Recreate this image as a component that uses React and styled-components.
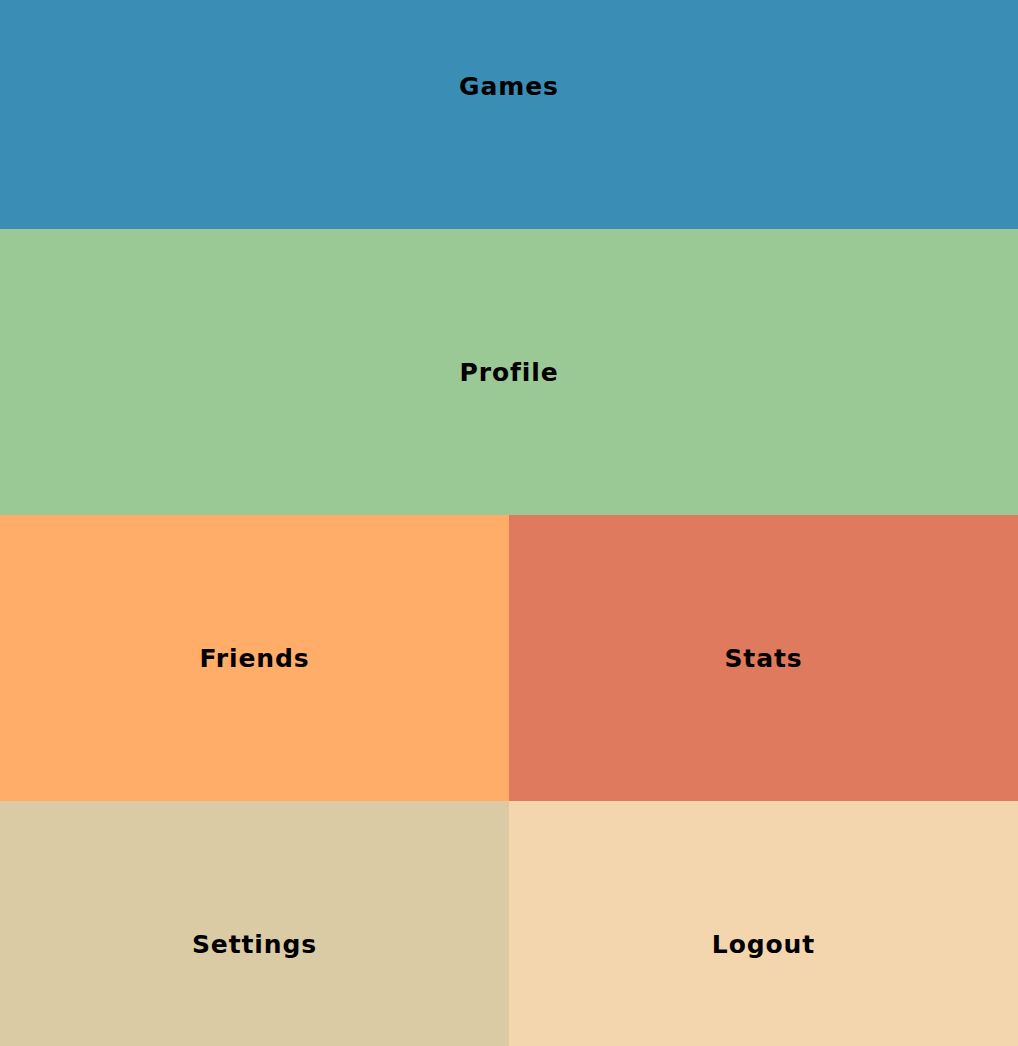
import React from 'react';
import styled, { createGlobalStyle } from 'styled-components';

const GlobalStyle = createGlobalStyle`
  html, body {
    margin: 0;
    padding: 0;
    overflow: hidden;
  }
`;

const Menu = styled.div`
  display: grid;
  grid-template-columns: 509px 509px;
  grid-template-rows: 229px 286px 286px 286px;
  width: 1018px;
  height: 1046px;
  overflow: hidden;
`;

const Tile = styled.a`
  display: flex;
  align-items: center;
  justify-content: center;
  grid-column: ${(p) => (p.wide ? '1 / 3' : 'auto')};
  padding-bottom: ${(p) => (p.cut ? '57px' : '0')};
  background: ${(p) => p.color};
  color: #000;
  text-decoration: none;
  font-family: 'DejaVu Sans', 'Liberation Sans', sans-serif;
  font-weight: 700;
  font-size: 25px;
  letter-spacing: 0.9px;
  cursor: pointer;
`;

const tiles = [
  { label: 'Games', color: '#3a8db4', wide: true, cut: true },
  { label: 'Profile', color: '#9bc995', wide: true },
  { label: 'Friends', color: '#ffad69' },
  { label: 'Stats', color: '#e07a5f' },
  { label: 'Settings', color: '#dacba5' },
  { label: 'Logout', color: '#f4d6ae' },
];

const App = () => {
  return (
    <>
      <GlobalStyle />
      <Menu>
        {tiles.map((t) => (
          <Tile key={t.label} color={t.color} wide={t.wide} cut={t.cut}>
            {t.label}
          </Tile>
        ))}
      </Menu>
    </>
  );
};

export default App;
